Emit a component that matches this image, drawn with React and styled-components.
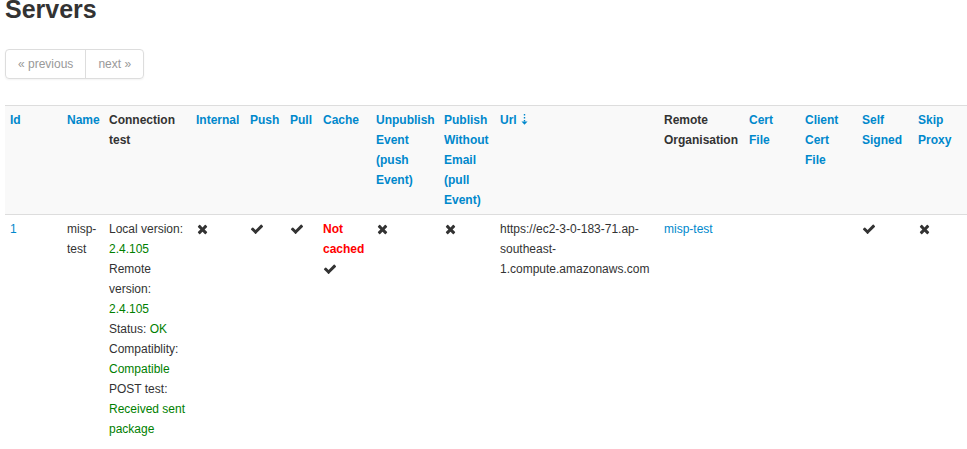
import styled, { createGlobalStyle } from 'styled-components';

const GlobalStyle = createGlobalStyle`
  body {
    margin: 0;
    background: #fff;
    color: #333;
    font-family: "Liberation Sans", Arial, sans-serif;
    font-size: 12px;
    line-height: 20px;
  }
`;

const Page = styled.div`
  padding: 0 0 0 5px;
`;

const Title = styled.h2`
  margin: -6px 0 25px;
  font-size: 25px;
  line-height: 30px;
  font-weight: bold;
  color: #333;
`;

const Pagination = styled.ul`
  display: inline-flex;
  margin: 0 0 26px;
  padding: 0;
  list-style: none;
  border: 1px solid #ddd;
  border-radius: 4px;
  box-shadow: 0 1px 2px rgba(0, 0, 0, 0.05);
`;

const PageItem = styled.li`
  padding: 4px 12px;
  line-height: 20px;
  color: #999;
  border-left: ${(p) => (p.$first ? '0' : '1px solid #ddd')};
`;

const Table = styled.table`
  width: 962px;
  table-layout: fixed;
  border-collapse: collapse;
  border-spacing: 0;
`;

const HeadRow = styled.tr`
  background: #f9f9f9;
  border-top: 1px solid #ddd;
  border-bottom: 1px solid #ddd;
`;

const Th = styled.th`
  padding: 4px 5px;
  text-align: left;
  vertical-align: top;
  font-weight: bold;
  color: ${(p) => (p.$plain ? '#333' : '#0088cc')};
`;

const Td = styled.td`
  padding: 4px 5px;
  vertical-align: top;
`;

const Link = styled.a`
  color: #0088cc;
  text-decoration: none;
`;

const Ok = styled.span`
  color: green;
`;

const NotCached = styled.span`
  display: block;
  color: red;
  font-weight: bold;
`;

const IconSvg = styled.svg`
  display: block;
  height: 14px;
  margin: 3px 0 3px ${(p) => p.$shift || 0}px;
  fill: #333;
`;

const SortArrow = () => (
  <svg width="7" height="11" viewBox="0 0 7 11" style={{ marginLeft: 4, verticalAlign: '-1px' }}>
    <path d="M3.5 0v1.5M3.5 3v1.5M3.5 6v1.5" stroke="#0088cc" strokeWidth="1.4" />
    <path d="M0.5 7.5h6L3.5 10.8z" fill="#0088cc" />
  </svg>
);

// font-awesome 4 glyphs, drawn at 14px
const Check = () => (
  <IconSvg viewBox="0 0 1792 1792" width="14">
    <path d="M1671 566q0 40-28 68l-724 724-136 136q-28 28-68 28t-68-28l-136-136-362-362q-28-28-28-68t28-68l136-136q28-28 68-28t68 28l294 295 656-657q28-28 68-28t68 28l136 136q28 28 28 68z" />
  </IconSvg>
);

const Cross = () => (
  <IconSvg viewBox="0 0 1408 1792" width="11" $shift={1}>
    <path d="M1298 1322q0 40-28 68l-136 136q-28 28-68 28t-68-28l-294-294-294 294q-28 28-68 28t-68-28l-136-136q-28-28-28-68t28-68l294-294-294-294q-28-28-28-68t28-68l136-136q28-28 68-28t68 28l294 294 294-294q28-28 68-28t68 28l136 136q28 28 28 68t-28 68l-294 294 294 294q28 28 28 68z" />
  </IconSvg>
);

const cols = [57, 42, 87, 54, 40, 33, 53, 68, 56, 164, 85, 56, 57, 56, 54];

const headers = [
  { label: 'Id' },
  { label: 'Name' },
  { label: 'Connection test', plain: true },
  { label: 'Internal' },
  { label: 'Push' },
  { label: 'Pull' },
  { label: 'Cache' },
  { label: 'Unpublish Event (push Event)' },
  { label: 'Publish Without Email (pull Event)' },
  { label: 'Url', sort: true },
  { label: 'Remote Organisation', plain: true },
  { label: 'Cert File' },
  { label: 'Client Cert File' },
  { label: 'Self Signed' },
  { label: 'Skip Proxy' },
];

export default function App() {
  return (
    <Page>
      <GlobalStyle />
      <Title>Servers</Title>
      <Pagination>
        <PageItem $first>« previous</PageItem>
        <PageItem>next »</PageItem>
      </Pagination>
      <Table>
        <colgroup>
          {cols.map((w, i) => (
            <col key={i} style={{ width: w }} />
          ))}
        </colgroup>
        <thead>
          <HeadRow>
            {headers.map((h) => (
              <Th key={h.label} $plain={h.plain}>
                {h.label}
                {h.sort && <SortArrow />}
              </Th>
            ))}
          </HeadRow>
        </thead>
        <tbody>
          <tr>
            <Td>
              <Link>1</Link>
            </Td>
            <Td>misp-test</Td>
            <Td>
              Local version: <Ok>2.4.105</Ok>
              <br />
              Remote version: <Ok>2.4.105</Ok>
              <br />
              Status: <Ok>OK</Ok>
              <br />
              Compatiblity: <Ok>Compatible</Ok>
              <br />
              POST test: <Ok>Received sent package</Ok>
            </Td>
            <Td>
              <Cross />
            </Td>
            <Td>
              <Check />
            </Td>
            <Td>
              <Check />
            </Td>
            <Td>
              <NotCached>Not cached</NotCached>
              <Check />
            </Td>
            <Td>
              <Cross />
            </Td>
            <Td>
              <Cross />
            </Td>
            <Td>https://ec2-3-0-183-71.ap-southeast-1.compute.amazonaws.com</Td>
            <Td>
              <Link>misp-test</Link>
            </Td>
            <Td />
            <Td />
            <Td>
              <Check />
            </Td>
            <Td>
              <Cross />
            </Td>
          </tr>
        </tbody>
      </Table>
    </Page>
  );
}
